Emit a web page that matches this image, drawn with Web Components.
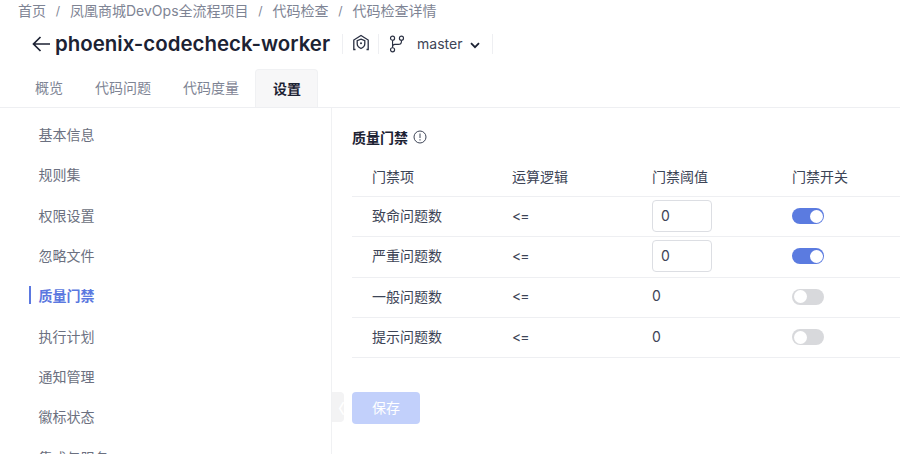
<!DOCTYPE html>
<html lang="zh">
<head>
<meta charset="utf-8">
<title>质量门禁</title>
<style>
    html, body {
        margin: 0;
        height: 454px;
        overflow: hidden;
        background: #fff;
        font-family: Inter, "Noto Sans CJK SC", sans-serif;
        font-size: 14px;
        color: #3d4456;
    }
</style>
</head>
<body>
<check-page></check-page>
<script>
class AppBreadcrumb extends HTMLElement {
    connectedCallback() {
        const items = ["首页", "凤凰商城DevOps全流程项目", "代码检查", "代码检查详情"];
        this.attachShadow({ mode: "open" }).innerHTML = `
            <style>
                :host { display: flex; height: 22px; padding: 0 0 1px 18px; margin-bottom: -1px; align-items: center; color: #7e8494; font-size: 14px; line-height: 22px; }
                i { font-style: normal; width: 24px; text-align: center; font-size: 12px; }
            </style>
            ${items.map((t) => `<span>${t}</span>`).join("<i>/</i>")}
        `;
    }
}

class RepoHeader extends HTMLElement {
    connectedCallback() {
        this.attachShadow({ mode: "open" }).innerHTML = `
            <style>
                :host { display: flex; align-items: center; height: 44px; padding-left: 31px; color: #1c2233; }
                h1 { margin: 0 12px 0 4px; font-size: 20.45px; font-weight: 600; line-height: 30px; white-space: nowrap; }
                .sep { width: 1px; height: 20px; background: #eeeff2; }
                .shield { margin: -3px 8px 0 9px; display: block; }
                .branch { margin: 0 12px 0 10px; display: block; }
                .name { font-size: 14px; color: #3d4456; padding-bottom: 2px; }
                .caret { margin: 2px 12px 0 8px; display: block; }
                svg { flex: none; }
            </style>
            <svg width="20" height="18" viewBox="0 0 20 18" fill="none" stroke="#1c2233" stroke-width="1.7"><path d="M19 9H2.500M9.500 2L2.500 9l7 7"/></svg>
            <h1>phoenix-codecheck-worker</h1>
            <span class="sep"></span>
            <svg class="shield" width="18" height="18" viewBox="0 0 18 18" fill="none" stroke="#2a3042" stroke-width="1.3"><path d="M3.500 15.500H1.800V6L9 1.500 16.200 6v9.500h-1.700"/><path d="M9 5.200l3.800 1.400v3.200c0 2.300-1.600 3.800-3.800 4.700-2.200-.9-3.800-2.400-3.800-4.700V6.600z"/><circle cx="9" cy="9.200" r="1" fill="#2a3042" stroke="none"/></svg>
            <span class="sep"></span>
            <svg class="branch" width="16" height="20" viewBox="0 0 18 20" fill="none" stroke="#2a3042" stroke-width="1.300"><circle cx="4" cy="3.500" r="2.300"/><circle cx="14" cy="3.500" r="2.300"/><circle cx="4" cy="16.500" r="2.300"/><path d="M4 5.800v8.400M14 5.800v1.400c0 2.200-1.400 3.300-3.600 3.300H6.600C5 10.500 4 11.500 4 13"/></svg>
            <span class="name">master</span>
            <svg class="caret" width="10" height="7" viewBox="0 0 10 7" fill="none" stroke="#1c2233" stroke-width="1.800"><path d="M1 1.200l4 4 4-4"/></svg>
            <span class="sep"></span>
        `;
    }
}

class TabBar extends HTMLElement {
    connectedCallback() {
        const tabs = ["概览", "代码问题", "代码度量", "设置"];
        this.attachShadow({ mode: "open" }).innerHTML = `
            <style>
                :host { display: flex; height: 38px; margin-top: 3px; padding-left: 19px; border-bottom: 1px solid #eeeff2; font-size: 14px; }
                span { display: flex; align-items: center; padding: 0 16px 2px; color: #7e8494; border-radius: 4px 4px 0 0; }
                span.on { color: #1c2233; font-weight: 700; background: #f7f7f8; padding: 0 16px 2px 17px; border: 1px solid #f0f1f3; border-bottom: 0; }
            </style>
            ${tabs.map((t, i) => `<span class="${i === 3 ? "on" : ""}">${t}</span>`).join("")}
        `;
    }
}

class SideMenu extends HTMLElement {
    connectedCallback() {
        const items = ["基本信息", "规则集", "权限设置", "忽略文件", "质量门禁", "执行计划", "通知管理", "徽标状态", "集成与服务"];
        this.attachShadow({ mode: "open" }).innerHTML = `
            <style>
                :host { display: block; box-sizing: border-box; width: 332px; flex: none; padding-top: 6px; border-right: 1px solid #f0f1f3; }
                div { height: 40.3px; display: flex; align-items: center; padding-left: 38.500px; position: relative; color: #6b7080; font-size: 14px; }
                div.on { color: #5b78e0; font-weight: 700; }
                div.on::before { content: ""; position: absolute; left: 29px; top: 11px; height: 18px; width: 2px; background: #5b78e0; }
            </style>
            ${items.map((t) => `<div class="${t === "质量门禁" ? "on" : ""}">${t}</div>`).join("")}
        `;
    }
}

class GateSwitch extends HTMLElement {
    connectedCallback() {
        this.attachShadow({ mode: "open" }).innerHTML = `
            <style>
                :host { display: block; position: relative; box-sizing: border-box; width: 32px; height: 16px; border-radius: 8px; background: #d8d9dc; }
                :host([on]) { background: #5b7be0; }
                b { position: absolute; top: 1.5px; left: 2px; width: 13px; height: 13px; border-radius: 50%; background: #fff; }
                :host([on]) b { left: 17.500px; }
            </style>
            <b></b>
        `;
    }
}

class GateRow extends HTMLElement {
    connectedCallback() {
        const value = this.hasAttribute("edit")
            ? `<span class="box">0</span>`
            : `<span class="t">0</span>`;
        this.attachShadow({ mode: "open" }).innerHTML = `
            <style>
                :host { display: grid; grid-template-columns: repeat(4, 140px); height: 38.300px; padding: 0 0 1px 20px; align-items: center; border-bottom: 1px solid #eeeff2; font-size: 14px; color: #3d4456; }
                .t { padding-bottom: 2px; }
                .box { display: flex; box-sizing: border-box; align-items: center; width: 60px; height: 32px; padding: 0 0 1px 8px; border: 1px solid #dcdee3; border-radius: 4px; }
                .op { letter-spacing: -1px; padding-bottom: 2px; }
            </style>
            <span class="t">${this.getAttribute("name")}</span>
            <span class="op">&lt;=</span>
            ${value}
            <span><gate-switch ${this.hasAttribute("on") ? "on" : ""}></gate-switch></span>
        `;
    }
}

class QualityGate extends HTMLElement {
    connectedCallback() {
        const heads = ["门禁项", "运算逻辑", "门禁阈值", "门禁开关"];
        this.attachShadow({ mode: "open" }).innerHTML = `
            <style>
                :host { display: block; position: relative; flex: 1; padding: 19px 0 0 20px; }
                h2 { display: flex; align-items: center; gap: 5px; margin: -1px 0 0; height: 22px; font-size: 14px; font-weight: 700; color: #1c2233; }
                .head { display: grid; grid-template-columns: repeat(4, 140px); height: 35px; margin-top: 10px; padding: 0 0 3px 20px; align-items: center; border-bottom: 1px solid #eeeff2; color: #3d4456; }
                .save { display: flex; box-sizing: border-box; align-items: center; justify-content: center; width: 68px; height: 32px; margin-top: 34px; padding-bottom: 2px; border-radius: 4px; background: #c2d0fb; color: #fff; font-size: 14px; }
                .fold { position: absolute; left: 0; top: 284px; width: 12px; height: 30px; display: flex; align-items: center; justify-content: center; background: #f3f3f4; border-radius: 0 4px 4px 0; color: #fff; font-size: 14px; font-weight: 700; }
            </style>
            <h2>质量门禁
                <svg width="14" height="14" viewBox="0 0 14 14" fill="none" stroke="#3d4456"><circle cx="7" cy="7" r="6"/><path d="M7 3.500v4.500M7 9.200v1.300"/></svg>
            </h2>
            <div class="head">${heads.map((h) => `<span>${h}</span>`).join("")}</div>
            <slot></slot>
            <div class="save">保存</div>
            <div class="fold">〈</div>
        `;
    }
}

class CheckPage extends HTMLElement {
    connectedCallback() {
        this.attachShadow({ mode: "open" }).innerHTML = `
            <style>
                :host { display: block; width: 900px; height: 454px; overflow: hidden; }
                .body { display: flex; height: 400px; }
            </style>
            <app-breadcrumb></app-breadcrumb>
            <repo-header></repo-header>
            <tab-bar></tab-bar>
            <div class="body">
                <side-menu></side-menu>
                <quality-gate>
                    <gate-row name="致命问题数" edit on></gate-row>
                    <gate-row name="严重问题数" edit on></gate-row>
                    <gate-row name="一般问题数"></gate-row>
                    <gate-row name="提示问题数"></gate-row>
                </quality-gate>
            </div>
        `;
    }
}

customElements.define("app-breadcrumb", AppBreadcrumb);
customElements.define("repo-header", RepoHeader);
customElements.define("tab-bar", TabBar);
customElements.define("side-menu", SideMenu);
customElements.define("gate-switch", GateSwitch);
customElements.define("gate-row", GateRow);
customElements.define("quality-gate", QualityGate);
customElements.define("check-page", CheckPage);
</script>
</body>
</html>
